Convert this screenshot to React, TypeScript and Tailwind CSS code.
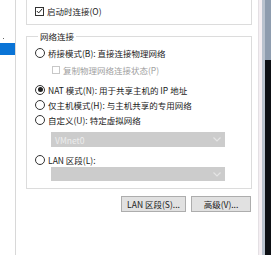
import React from "react";

const font = { fontFamily: '"Noto Sans CJK SC", "Noto Sans", sans-serif' };

function Radio({ checked }: { checked?: boolean }) {
  return (
    <span className="w-[10px] h-[10px] rounded-full border border-[#333] bg-white flex items-center justify-center shrink-0">
      {checked && <span className="w-[5px] h-[5px] rounded-full bg-[#222]" />}
    </span>
  );
}

function Chevron() {
  return (
    <svg width="8" height="5" viewBox="0 0 8 5" className="shrink-0">
      <path d="M0.5 0.5 L4 4 L7.5 0.5" fill="none" stroke="#e4e4e4" strokeWidth="1.2" />
    </svg>
  );
}

export default function App() {
  return (
    <div className="w-[271px] h-[255px] flex bg-white overflow-hidden text-[8.5px] leading-[12px] text-[#1a1a1a]" style={font}>
      {/* left tree panel */}
      <div className="w-[16px] shrink-0 border-r border-[#d8d8d8] flex flex-col">
        <div className="h-[38px]" />
        <div className="w-[1px] h-[1px] bg-[#666] ml-[3px]" />
        <div className="h-[4px]" />
        <div className="h-[12px] bg-[#0a74d6]" />
      </div>

      {/* main */}
      <div className="w-[242px] shrink-0 pl-[10px] flex flex-col">
        <div className="w-[226px] h-[25px] border-x border-b border-[#dcdcdc] pl-[8px] flex items-center pb-[2px]">
          <span className="w-[9px] h-[9px] border border-[#333] bg-white flex items-center justify-center shrink-0">
            <svg width="7" height="6" viewBox="0 0 7 6">
              <path d="M0.8 3 L2.7 4.9 L6.2 0.8" fill="none" stroke="#222" strokeWidth="1" />
            </svg>
          </span>
          <span className="ml-[3px]">启动时连接(O)</span>
        </div>

        <fieldset className="w-[226px] mt-[5px] border border-[#dcdcdc] px-[8px] pb-[7px]">
          <legend className="ml-[3px] px-[2px] leading-[12px]">网络连接</legend>
          <div className="mt-[3px] h-[15px] flex items-center">
            <Radio />
            <span className="ml-[3px]">桥接模式(B): 直接连接物理网络</span>
          </div>
          <div className="mt-[2px] h-[15px] flex items-center pl-[17px] text-[#a0a0a0]">
            <span className="w-[8px] h-[8px] border border-[#c8c8c8] bg-white shrink-0" />
            <span className="ml-[3px]">复制物理网络连接状态(P)</span>
          </div>
          <div className="mt-[5px] h-[15px] flex items-center">
            <Radio checked />
            <span className="ml-[3px]">NAT 模式(N): 用于共享主机的 IP 地址</span>
          </div>
          <div className="h-[15px] flex items-center">
            <Radio />
            <span className="ml-[3px]">仅主机模式(H): 与主机共享的专用网络</span>
          </div>
          <div className="h-[15px] flex items-center">
            <Radio />
            <span className="ml-[3px]">自定义(U): 特定虚拟网络</span>
          </div>
          <div className="mt-[5px] ml-[16px] w-[174px] h-[15px] bg-[#cccccc] flex items-center justify-between pl-[4px] pr-[4px]">
            <span className="text-[#ededed]">VMnet0</span>
            <Chevron />
          </div>
          <div className="mt-[5px] h-[15px] flex items-center">
            <Radio />
            <span className="ml-[3px]">LAN 区段(L):</span>
          </div>
          <div className="ml-[16px] w-[174px] h-[14px] bg-[#cccccc] flex items-center justify-end pr-[4px]">
            <Chevron />
          </div>
        </fieldset>

        <div className="w-[225px] mt-[7px] flex justify-end gap-[5px]">
          <div className="w-[65px] h-[16px] bg-[#e1e1e1] border border-[#adadad] flex items-center justify-center">LAN 区段(S)...</div>
          <div className="w-[60px] h-[16px] bg-[#e1e1e1] border border-[#adadad] flex items-center justify-center">高级(V)...</div>
        </div>
      </div>

      {/* right edge */}
      <div className="w-[1px] bg-[#e4e0e4]" />
      <div className="w-[3px] bg-[#f4eef2]" />
      <div className="w-[3px] bg-[#b9c2ce]" />
      <div className="flex-1 flex flex-col">
        <div className="h-[60px] bg-[#8e9cae]" />
        <div className="flex-1 bg-[#0d0f14]" />
      </div>
    </div>
  );
}
